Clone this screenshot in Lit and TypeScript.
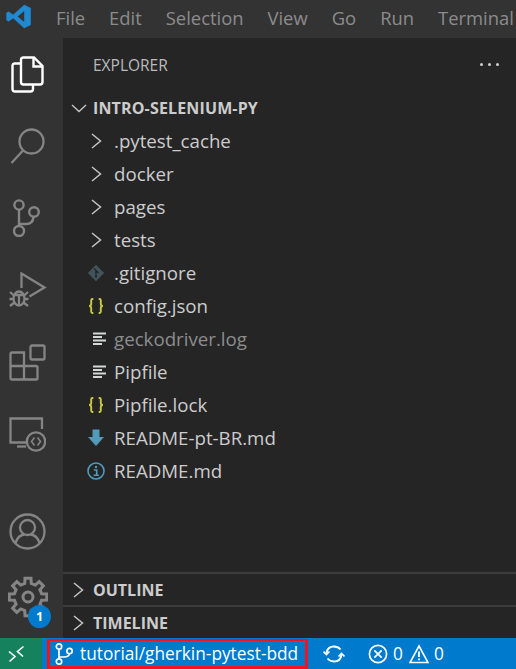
import { LitElement, html, css, svg } from "lit";
import { customElement } from "lit/decorators.js";

const chevR = svg`<svg class="chev" viewBox="0 0 16 22" width="16" height="22"><path d="M4 4 L12.5 11 L4 18" fill="none" stroke="#c5c5c5" stroke-width="1.5"/></svg>`;
const chevD = svg`<svg class="chev" viewBox="0 0 16 16" width="16" height="16"><path d="M1 5 L8 11.5 L15 5" fill="none" stroke="#c5c5c5" stroke-width="1.4"/></svg>`;

const ic = {
  git: svg`<svg viewBox="0 0 18 18" width="18" height="18"><path d="M9 0.8 L17.2 9 L9 17.2 L0.8 9 Z" fill="#41535b"/><path d="M7 4.5 L11.5 9 M9 8 V13" stroke="#252526" stroke-width="1.2"/><circle cx="9" cy="8" r="1.1" fill="#252526"/><circle cx="9" cy="12.5" r="1.1" fill="#252526"/></svg>`,
  json: svg`<svg viewBox="0 0 18 18" width="18" height="18" fill="none" stroke="#cbcb41" stroke-width="1.9"><path d="M6.3 2 H5.4 Q4.2 2 4.2 3.5 V7 Q4.2 8.7 2.2 9 Q4.2 9.3 4.2 11 V14.5 Q4.2 16 5.4 16 H6.3"/><path d="M11.7 2 H12.6 Q13.8 2 13.8 3.5 V7 Q13.8 8.7 15.8 9 Q13.8 9.3 13.8 11 V14.5 Q13.8 16 12.6 16 H11.7"/></svg>`,
  lines: svg`<svg viewBox="0 0 20 18" width="20" height="18" fill="#d4d7d6"><rect x="6" y="2.5" width="13" height="2"/><rect x="6" y="6" width="9" height="2"/><rect x="6" y="9.5" width="13" height="2"/><rect x="6" y="13" width="9" height="2"/></svg>`,
  down: svg`<svg viewBox="0 0 18 18" width="18" height="18"><path d="M5.5 0.5 H12.5 V8 H17 L9 17 L1 8 H5.5 Z" fill="#519aba"/></svg>`,
  info: svg`<svg viewBox="0 0 18 18" width="18" height="18" fill="none"><circle cx="9" cy="9" r="8" stroke="#519aba" stroke-width="1.6"/><circle cx="9" cy="5" r="1.2" fill="#519aba"/><path d="M6.8 8 H9.7 V13 M6.6 13.2 H11.8" stroke="#519aba" stroke-width="1.6"/></svg>`,
};

function gearPath(cx: number, cy: number, rOut: number, rIn: number, teeth: number) {
  const pts: string[] = [];
  const step = (Math.PI * 2) / teeth;
  for (let i = 0; i < teeth; i++) {
    const a = i * step - Math.PI / 2;
    const w = step * 0.2;
    const v = step * 0.3;
    const p = (ang: number, r: number) => `${(cx + r * Math.cos(ang)).toFixed(2)} ${(cy + r * Math.sin(ang)).toFixed(2)}`;
    pts.push(p(a - v, rIn), p(a - w, rOut), p(a + w, rOut), p(a + v, rIn));
  }
  return "M" + pts.join(" L") + " Z";
}

const folders = [".pytest_cache", "docker", "pages", "tests"];
const files: [any, string, boolean?][] = [
  [ic.git, ".gitignore"], [ic.json, "config.json"], [ic.lines, "geckodriver.log", true],
  [ic.lines, "Pipfile"], [ic.json, "Pipfile.lock"], [ic.down, "README-pt-BR.md"], [ic.info, "README.md"],
];

@customElement("app-root")
export class AppRoot extends LitElement {
  static styles = css`
    :host { display: block; width: 516px; height: 669px; overflow: hidden; font-family: "Open Sans", "Noto Sans", sans-serif; background: #252526; }
    .app { display: flex; flex-direction: column; height: 669px; }
    .title { height: 38px; flex: none; background: #333333; display: flex; align-items: center; color: #8c8c8c; font-size: 18.4px; white-space: nowrap; overflow: hidden; }
    .logo { width: 56px; flex: none; display: flex; padding-left: 6px; padding-bottom: 6px; box-sizing: border-box; }
    .menu { display: flex; gap: 24px; padding-bottom: 4px; }
    .main { flex: 1; display: flex; min-height: 0; }
    .activity { width: 63px; flex: none; background: #333333; display: flex; flex-direction: column; }
    .act { height: 72px; width: 55px; display: flex; align-items: center; justify-content: center; flex: none; position: relative; }
    .act.low { height: 66px; }
    .act svg { display: block; }
    .spacer { flex: 1; }
    .tail { height: 8px; flex: none; }
    .badge { position: absolute; left: 28px; top: 41px; width: 23px; height: 23px; border-radius: 50%; background: #007acc; color: #fff; font-size: 12.5px; font-weight: 700; display: flex; align-items: center; justify-content: center; }
    .side { flex: 1; display: flex; flex-direction: column; min-width: 0; background: #252526; color: #cccccc; }
    .head { height: 53px; flex: none; display: flex; align-items: center; justify-content: space-between; padding: 0 17px 0 30px; font-size: 15.5px; color: #bbbbbb; box-sizing: border-box; }
    .dots { display: flex; gap: 5px; }
    .dots i { width: 3px; height: 3px; border-radius: 50%; background: #d0d0d0; display: block; }
    .section { height: 33px; flex: none; display: flex; align-items: center; font-weight: 700; font-size: 16px; letter-spacing: 0.15px; color: #cccccc; box-sizing: border-box; }
    .section .tw { width: 30px; flex: none; display: flex; justify-content: flex-end; padding-right: 6px; box-sizing: border-box; }
    .row { height: 33px; flex: none; display: flex; align-items: center; font-size: 18.7px; color: #cccccc; white-space: nowrap; }
    .row .tw { width: 51px; flex: none; display: flex; justify-content: flex-start; padding-left: 25px; box-sizing: border-box; }
    .row .tw.icon { padding-left: 23.5px; }
    .row svg { display: block; }
    .row.dim { color: #8c8c8c; }
    .tree { flex: 1; min-height: 0; }
    .pane { height: 33px; flex: none; border-top: 2px solid #3c3c3c; box-sizing: border-box; display: flex; align-items: center; font-weight: 700; font-size: 16px; color: #cccccc; }
    .pane .tw { width: 30px; flex: none; padding-left: 7px; box-sizing: border-box; display: flex; }
    .status { height: 31px; flex: none; background: #007acc; display: flex; align-items: stretch; color: #fff; font-size: 17.3px; white-space: nowrap; }
    .remote { width: 42px; flex: none; background: #16825d; display: flex; align-items: center; justify-content: center; padding-right: 8px; box-sizing: border-box; }
    .gap { width: 5px; flex: none; }
    .branch { width: 261px; box-sizing: border-box; border: 3px solid #f0141e; border-top-width: 2px; display: flex; align-items: center; gap: 6px; padding-left: 4px; margin-top: 1px; flex: none; }
    .sync { margin-left: 15px; display: flex; align-items: center; }
    .prob { margin-left: 23px; display: flex; align-items: center; gap: 5px; }
    .warn { margin-left: 1px; }
    .status svg { display: block; flex: none; }
  `;

  render() {
    return html`<div class="app">
      <div class="title">
        <div class="logo">
          <svg viewBox="0 0 24 24" width="25" height="25"><path d="M17.5 0.8 L23.8 3.8 V20.2 L17.5 23.2 L6.8 13.6 L2.6 16.8 L0.3 15.6 V8.4 L2.6 7.2 L6.8 10.4 Z M17.5 6.8 L11.2 12 L17.5 17.2 Z" fill="#1f8ad2" fill-rule="evenodd"/></svg>
        </div>
        <div class="menu"><span>File</span><span>Edit</span><span>Selection</span><span>View</span><span>Go</span><span>Run</span><span>Terminal</span></div>
      </div>
      <div class="main">
        <div class="activity">
          <div class="act">
            <svg viewBox="0 0 33 37" width="33" height="37" fill="none" stroke="#fff" stroke-width="2.4"><path d="M10 7.5 H4 Q1.5 7.5 1.5 10 V33 Q1.5 35.5 4 35.5 H19.5 Q22 35.5 22 33 V28.5" /><path d="M10 4 Q10 1.5 12.5 1.5 H23 L31.5 10 V26 Q31.5 28.5 29 28.5 H12.5 Q10 28.5 10 26 Z"/><path d="M22.5 1.5 V10.5 H31.5"/></svg>
          </div>
          <div class="act">
            <svg viewBox="0 0 35 36" width="35" height="36" fill="none" stroke="#858585" stroke-width="2.3"><circle cx="21.5" cy="13.5" r="12"/><path d="M13 22.5 L1.5 35"/></svg>
          </div>
          <div class="act">
            <svg viewBox="0 0 30 38" width="30" height="38" fill="none" stroke="#858585" stroke-width="2.4"><circle cx="6" cy="6" r="4.6"/><circle cx="6" cy="32" r="5"/><circle cx="21" cy="13" r="4.8"/><path d="M6 10.6 V27 M6 25 H13 Q20 25 20.5 17.8"/></svg>
          </div>
          <div class="act">
            <svg viewBox="0 0 38 36" width="38" height="36" fill="none" stroke="#858585" stroke-width="2.3"><path d="M12.5 16 V1.5 L35.5 15.5 L20.5 24.5"/><ellipse cx="10" cy="26.5" rx="5.5" ry="7"/><path d="M5 23 H15 M10 23 V33.5 M1 20 L5.5 24 M19 20 L14.5 24 M0.5 27 H4.5 M15.5 27 H19.5 M1 34 L5.5 30.5 M19 34 L14.5 30.5"/></svg>
          </div>
          <div class="act">
            <svg viewBox="0 0 37 37" width="37" height="37" fill="none" stroke="#858585" stroke-width="2.3"><rect x="21.5" y="1.5" width="14" height="14" rx="1.5"/><path d="M3 8.5 H15 V35.5 H3 Q1.5 35.5 1.5 34 V10 Q1.5 8.5 3 8.5 Z M1.5 22 H27 Q28.5 22 28.5 23.5 V34 Q28.5 35.5 27 35.5 H15"/></svg>
          </div>
          <div class="act">
            <svg viewBox="0 0 37 35" width="37" height="35" fill="none" stroke="#858585" stroke-width="2.3"><path d="M17 25.5 H1.5 V1.5 H33 V12"/><path d="M8 29.5 H17"/><circle cx="27" cy="24.5" r="9.2" fill="#333333"/><path d="M25.5 20.5 L22.5 24.5 L25.5 28.5 M28.5 20.5 L31.5 24.5 L28.5 28.5" stroke-width="1.6"/></svg>
          </div>
          <div class="spacer"></div>
          <div class="act low">
            <svg viewBox="0 0 37 37" width="37" height="37" fill="none" stroke="#858585" stroke-width="2.3"><circle cx="18.5" cy="18.5" r="17"/><circle cx="18.5" cy="14.5" r="7.5"/><path d="M6.5 30 Q9 22 15.5 21.5 M30.5 30 Q28 22 21.5 21.5"/></svg>
          </div>
          <div class="act low">
            <svg viewBox="0 0 40 42" width="40" height="42" fill="none" stroke="#858585" stroke-width="3"><path d="${gearPath(20, 21, 19, 14, 8)}"/><circle cx="20" cy="21" r="5"/></svg>
            <div class="badge">1</div>
          </div>
          <div class="tail"></div>
        </div>
        <div class="side">
          <div class="head"><span>EXPLORER</span><div class="dots"><i></i><i></i><i></i></div></div>
          <div class="section"><div class="tw">${chevD}</div>INTRO-SELENIUM-PY</div>
          <div class="tree">
            ${folders.map((n) => html`<div class="row"><div class="tw">${chevR}</div>${n}</div>`)}
            ${files.map(([i, n, d]) => html`<div class="row ${d ? "dim" : ""}"><div class="tw icon">${i}</div>${n}</div>`)}
          </div>
          <div class="pane"><div class="tw">${chevR}</div>OUTLINE</div>
          <div class="pane"><div class="tw">${chevR}</div>TIMELINE</div>
        </div>
      </div>
      <div class="status">
        <div class="remote"><svg viewBox="0 0 18 18" width="18" height="18" fill="none" stroke="#fff" stroke-width="1.6"><path d="M1 6.5 L7 11.5 L1.5 16.5"/><path d="M15.5 1.5 L9.5 6.5 L15 11.5"/></svg></div>
        <div class="gap"></div>
        <div class="branch">
          <svg viewBox="0 0 20 24" width="20" height="24" fill="none" stroke="#fff" stroke-width="1.7"><circle cx="5" cy="4.5" r="2.7"/><circle cx="5" cy="19.5" r="2.7"/><circle cx="15.5" cy="9" r="2.7"/><path d="M5 7.2 V16.8 M5 15 H10 Q15 15 15.5 11.7"/></svg>
          <span>tutorial/gherkin-pytest-bdd</span>
        </div>
        <div class="sync"><svg viewBox="0 0 22 20" width="22" height="20" fill="none" stroke="#fff" stroke-width="1.8"><path d="M3.5 9 Q4.5 2.5 11 2.5 Q15 2.5 17.5 5.5"/><path d="M18.5 11 Q17.5 17.5 11 17.5 Q7 17.5 4.5 14.5"/><path d="M0.5 7.5 L3.5 10.5 L6.5 7.5 M15.5 12.5 L18.5 9.5 L21.5 12.5" stroke-width="1.7"/></svg></div>
        <div class="prob">
          <svg viewBox="0 0 20 20" width="20" height="20" fill="none" stroke="#fff" stroke-width="1.7"><circle cx="10" cy="10" r="8.6"/><path d="M6.3 6.3 L13.7 13.7 M13.7 6.3 L6.3 13.7"/></svg>
          <span>0</span>
          <svg class="warn" viewBox="0 0 20 20" width="20" height="20" fill="none" stroke="#fff" stroke-width="1.6"><path d="M10 2 L19 18.5 H1 Z"/><path d="M10 7.5 V13 M10 14.5 V16.3" stroke-width="1.8"/></svg>
          <span>0</span>
        </div>
      </div>
    </div>`;
  }
}
